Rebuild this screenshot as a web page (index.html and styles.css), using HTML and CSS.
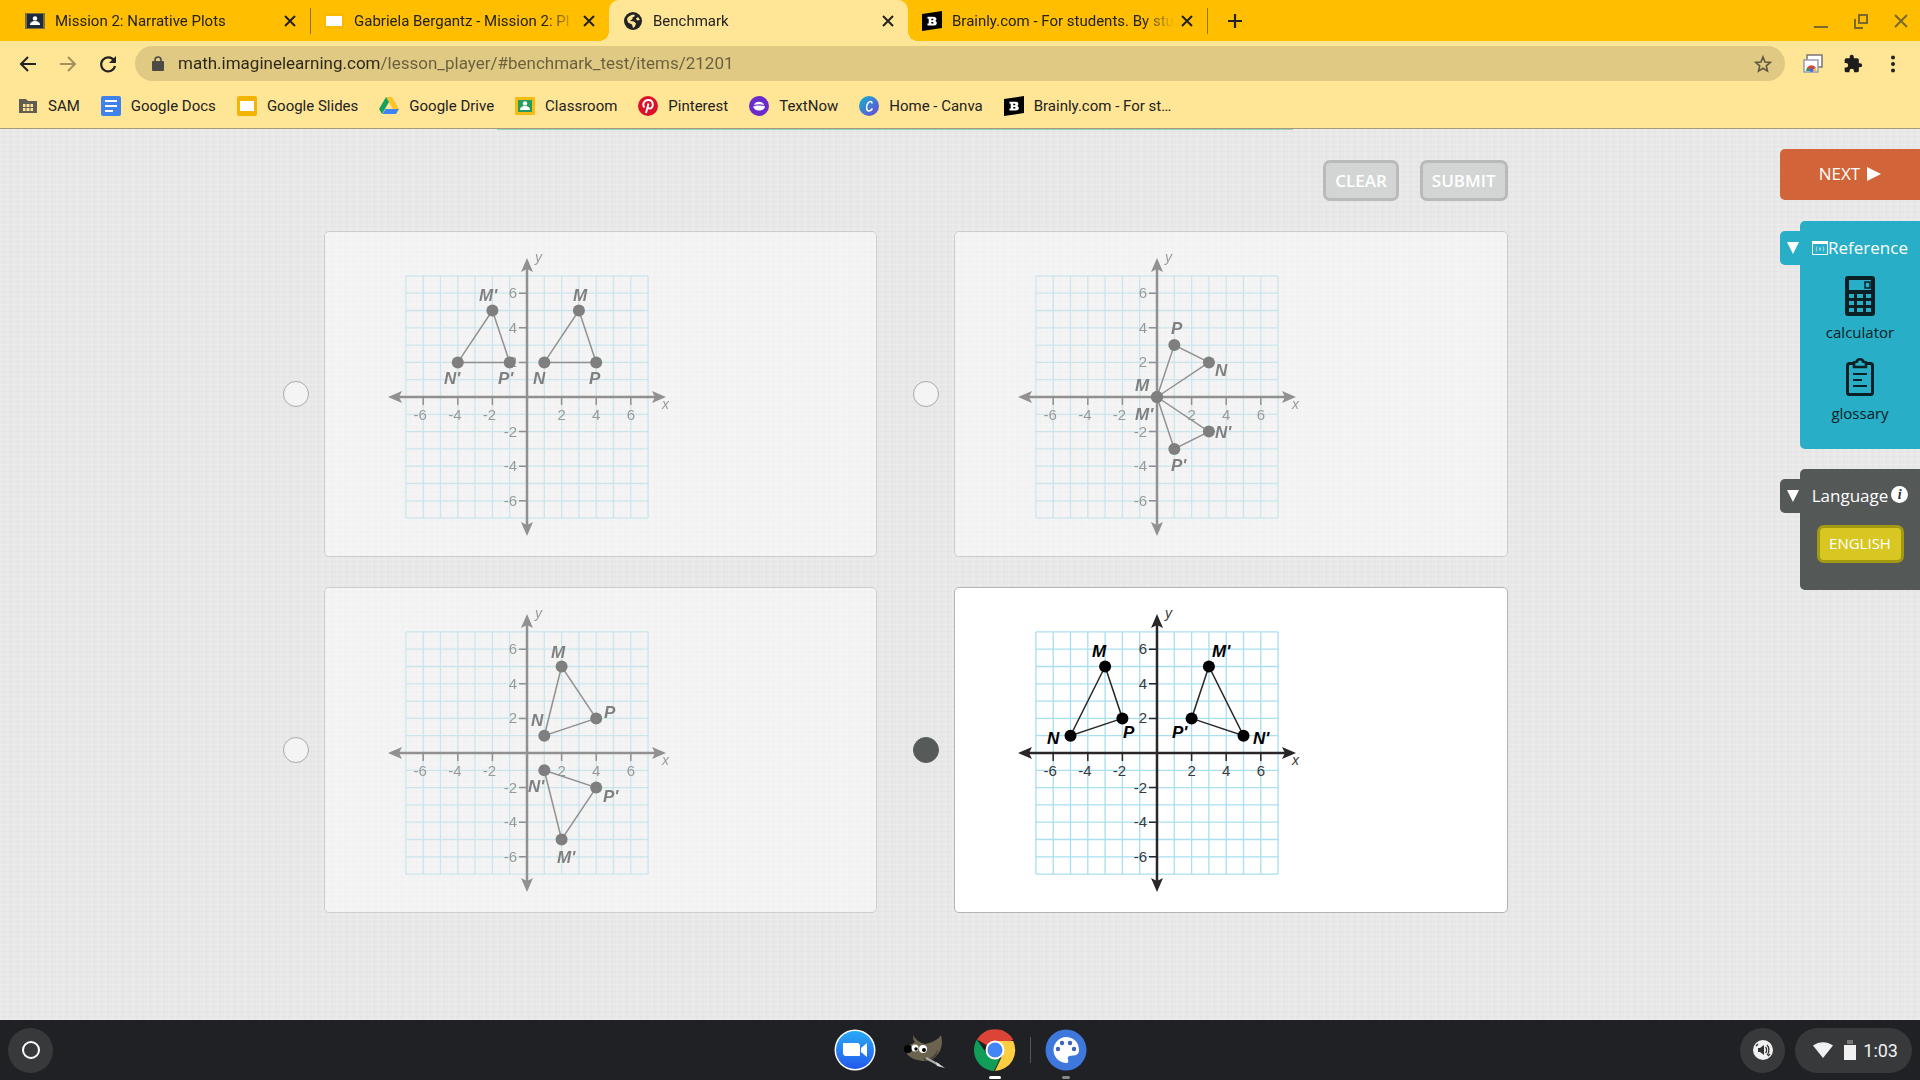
FILE: index.html
```html
<!DOCTYPE html>
<html lang="en">
<head>
  <meta charset="UTF-8">
  <meta name="viewport" content="width=device-width, initial-scale=1.0">
  <title>Benchmark</title>
  <link rel="stylesheet" href="styles.css">
</head>
<body>

  <!-- shared icons -->
  <svg class="sprite" aria-hidden="true">
    <symbol id="i-x" viewBox="0 0 20 20"><path d="M5 5l10 10M15 5L5 15" fill="none" stroke="currentColor" stroke-width="2"/></symbol>
    <symbol id="i-person" viewBox="0 0 20 20"><circle cx="10" cy="7.4" r="2.2" fill="#fff"/><path d="M5 14c0-3 2.600-4 5-4s5 1 5 4z" fill="#fff"/></symbol>
    <symbol id="i-brainly" viewBox="0 0 20 20"><path d="M0 3L20 0v17L0 20z" fill="#000"/><path d="M5.500 5.800h5.600c2.300 0 3.300.9 3.300 2.300 0 .9-.5 1.500-1.200 1.800 1 .3 1.600 1 1.600 2 0 1.800-1.300 2.600-3.500 2.600H5.500v-1.900h1.200V7.700H5.500zM9.300 7.700v1.500h1c.7 0 1-.2 1-.8s-.3-.7-1-.7zm0 3.200v1.700h1.100c.7 0 1.100-.2 1.100-.9s-.4-.8-1.100-.8z" fill="#fff" fill-rule="evenodd"/></symbol>
  </svg>

  <!-- ======= TABS ======= -->
  <div class="tabs">
    <div class="tab">
      <svg class="fav" viewBox="0 0 20 20"><path d="M0 2h20v16H0z" fill="#7d6c3c"/><path d="M2 3h16v14H2z" fill="#1d2b3a"/><use href="#i-person"/></svg>
      <span class="tab-title">Mission 2: Narrative Plots</span>
      <button class="close" aria-label="Close tab"><svg viewBox="0 0 20 20"><use href="#i-x"/></svg></button>
    </div>
    <div class="tab divided">
      <svg class="fav" viewBox="0 0 20 20"><rect y="2" width="20" height="16" rx="1" fill="#f9b900"/><path d="M2 5h16v10H2z" fill="#fff"/></svg>
      <span class="tab-title">Gabriela Bergantz - Mission 2: Pl</span>
      <button class="close" aria-label="Close tab"><svg viewBox="0 0 20 20"><use href="#i-x"/></svg></button>
    </div>
    <div class="tab active">
      <svg class="fav" viewBox="0 0 20 20"><circle cx="10" cy="10" r="9" fill="#222"/><path d="M4 8c1-2.500 3.500-4 7-4.500l1 1.500-2.500 1.500v1.500L7 10l4 .5 2 2-1 3-2 1.500-1-3.500-4-2z" fill="#ffe596"/><path d="M15 6l2 3-3 .5-1-2z" fill="#ffe596"/></svg>
      <span class="tab-title">Benchmark</span>
      <button class="close" aria-label="Close tab"><svg viewBox="0 0 20 20"><use href="#i-x"/></svg></button>
    </div>
    <div class="tab">
      <svg class="fav" viewBox="0 0 20 20"><use href="#i-brainly"/></svg>
      <span class="tab-title">Brainly.com - For students. By stu</span>
      <button class="close" aria-label="Close tab"><svg viewBox="0 0 20 20"><use href="#i-x"/></svg></button>
    </div>
    <button class="new-tab divided" aria-label="New tab"><svg viewBox="0 0 20 20"><path d="M10 3v14M3 10h14" stroke="#222" stroke-width="2.200"/></svg></button>
    <div class="win-btns">
      <button aria-label="Minimize"><svg viewBox="0 0 20 20"><path d="M3 16h14" stroke="#77692f" stroke-width="2"/></svg></button>
      <button aria-label="Restore"><svg viewBox="0 0 20 20" fill="none" stroke="#77692f" stroke-width="2"><path d="M8 4h8v8H8zM4 8v9h8"/></svg></button>
      <button aria-label="Close"><svg viewBox="0 0 20 20"><path d="M4 4l12 12M16 4L4 16" stroke="#77692f" stroke-width="2"/></svg></button>
    </div>
  </div>

  <!-- ======= ADDRESS BAR ======= -->
  <div class="toolbar">
    <button aria-label="Back"><svg viewBox="0 0 20 20" fill="none" stroke="#222" stroke-width="2"><path d="M18 10H3M10 3l-7 7 7 7"/></svg></button>
    <button aria-label="Forward"><svg viewBox="0 0 20 20" fill="none" stroke="#a3915c" stroke-width="2"><path d="M2 10h15M10 3l7 7-7 7"/></svg></button>
    <button aria-label="Reload"><svg viewBox="0 0 20 20"><path d="M16 6.500A7 7 0 1 0 17 12" fill="none" stroke="#222" stroke-width="2.200"/><path d="M18 2v7h-7z" fill="#222"/></svg></button>
    <div class="address">
      <svg class="lock" viewBox="0 0 12 16"><rect y="5" width="12" height="10" rx="1" fill="#4d4a45"/><path d="M3 6V4a3 3 0 0 1 6 0v2" fill="none" stroke="#4d4a45" stroke-width="1.600"/></svg>
      <input class="url" type="text" aria-label="Address" value="math.imaginelearning.com/lesson_player/#benchmark_test/items/21201">
      <button class="star" aria-label="Bookmark"><svg viewBox="0 0 20 20"><path d="M10 3l2 5 5.300.4-4 3.500 1.200 5.200L10 14.300l-4.500 2.800 1.200-5.200-4-3.500L8 8z" fill="none" stroke="#5f5741" stroke-width="1.600"/></svg></button>
    </div>
    <div class="tools">
      <button aria-label="Webstore"><svg viewBox="0 0 20 20"><path d="M4 1h15v12H4z" fill="#fff" stroke="#777" stroke-width="1.500"/><path d="M1 6h14v12H1z" fill="#fff" stroke="#9a9ab0" stroke-width="1.500"/><path d="M3 17a5 5 0 0 1 2-4l3 4z" fill="#2b9a4b"/><path d="M4 14a5 5 0 0 1 9 0l-4 2z" fill="#dd4433"/><path d="M13 14a5 5 0 0 1 .5 3H9z" fill="#f8c320"/><circle cx="8.500" cy="16" r="2" fill="#4467e8"/></svg></button>
      <button aria-label="Extensions"><svg viewBox="0 0 24 24"><path d="M20.500 11H19V7a2 2 0 0 0-2-2h-4V3.500a2.500 2.500 0 0 0-5 0V5H4a2 2 0 0 0-2 2v3.800h1.500a2.700 2.700 0 0 1 0 5.400H2V20a2 2 0 0 0 2 2h3.800v-1.500a2.700 2.700 0 0 1 5.400 0V22H17a2 2 0 0 0 2-2v-4h1.500a2.500 2.500 0 0 0 0-5z" fill="#1d1d1d"/></svg></button>
      <button aria-label="Menu"><svg viewBox="0 0 20 20" fill="#222"><circle cx="10" cy="3.500" r="2"/><circle cx="10" cy="10" r="2"/><circle cx="10" cy="16.500" r="2"/></svg></button>
    </div>
  </div>

  <!-- ======= BOOKMARKS ======= -->
  <nav class="bookmarks">
    <a href="#"><svg viewBox="0 0 20 20"><path d="M1 5V3h7l2 2h9v12H1z" fill="#625d50"/><path d="M5 8h10v7H5z" fill="#ffe596"/><path d="M8 8v7M12 8v7M5 11.500h10" stroke="#625d50"/></svg>SAM</a>
    <a href="#"><svg viewBox="0 0 20 20"><rect width="20" height="20" rx="2" fill="#3f82ee"/><path d="M4 5h12M4 10h12M4 15h8" stroke="#fff" stroke-width="2"/></svg>Google Docs</a>
    <a href="#"><svg viewBox="0 0 20 20"><rect width="20" height="20" rx="2" fill="#f4b406"/><path d="M3 5h14v10H3z" fill="#fff"/></svg>Google Slides</a>
    <a href="#"><svg viewBox="0 0 20 20"><path d="M7 1h6l7 12h-6z" fill="#fbc22b"/><path d="M7 1l3 5-7 12-3-5z" fill="#12a15f"/><path d="M6.500 13H20l-3 5H3.500z" fill="#3e82f4"/></svg>Google Drive</a>
    <a href="#"><svg viewBox="0 0 20 20"><rect y="1" width="20" height="18" rx="1" fill="#f4bc15"/><path d="M3 4h14v12H3z" fill="#279b5a"/><use href="#i-person"/></svg>Classroom</a>
    <a href="#"><svg viewBox="0 0 20 20"><circle cx="10" cy="10" r="10" fill="#dc1029"/><path d="M6.500 11.500C3.500 8 6.500 4 10.300 4c6 0 5.500 8.500 1.500 8.500-1.300 0-2-.8-2-1.500M10.500 7.500L8 17" fill="none" stroke="#fff" stroke-width="1.900"/></svg>Pinterest</a>
    <a href="#"><svg viewBox="0 0 20 20"><circle cx="10" cy="10" r="10" fill="#6a2bc8"/><path d="M5 9c1-4.500 9-4.500 10 0-3-1-7-1-10 0zm-1 1.500c3-1.500 9-1.500 12 0-.5 3-3 4-6 4s-5-1.500-6-4z" fill="#fff"/></svg>TextNow</a>
    <a href="#"><svg viewBox="0 0 20 20"><defs><linearGradient id="canva" x1="0" x2="1" y1="0" y2="1"><stop offset="0" stop-color="#13b5cd"/><stop offset="1" stop-color="#6b43dc"/></linearGradient></defs><circle cx="10" cy="10" r="10" fill="url(#canva)"/><path d="M13 7.500c0-3-2.500-2.500-4-.5-2 3-2 8 1 8 1.500 0 2.500-.8 3.500-2.500" fill="none" stroke="#fff" stroke-width="1.500"/></svg>Home - Canva</a>
    <a href="#"><svg viewBox="0 0 20 20"><use href="#i-brainly"/></svg>Brainly.com - For st…</a>
  </nav>

  <!-- ======= LESSON ======= -->
  <div class="lesson">
    <main>
      <div class="progress"></div>
      <form class="question">
        <div class="actions">
          <button type="reset" class="btn">CLEAR</button>
          <button type="submit" class="btn">SUBMIT</button>
        </div>
        <div class="answers" id="answers"></div>
      </form>
    </main>

    <aside>
      <button class="next">NEXT <svg viewBox="0 0 14 14"><path d="M0 0l14 7-14 7z" fill="#fff"/></svg></button>

      <section class="panel reference">
        <button class="toggle" aria-label="Toggle reference"><svg viewBox="0 0 12 12"><path d="M0 0h12L6 12z" fill="#fff"/></svg></button>
        <h2><svg viewBox="0 0 16 14"><path d="M.5.500h15v13H.5z" fill="none" stroke="#fff"/><path d="M0 0h16v3H0z" fill="#fff"/><path d="M5 5.500c-1 1-1 4 0 5M11 5.500c1 1 1 4 0 5M7 6.500l2 3M9 6.500l-2 3" fill="none" stroke="#fff" stroke-width=".6"/></svg>Reference</h2>
        <button class="tool">
          <svg viewBox="0 0 30 40"><rect width="30" height="40" rx="3" fill="#0b2025"/><path d="M4 4h22v10H4z" fill="#28aec6"/><path d="M20 6h5v6h-5z" fill="none" stroke="#0b2025" stroke-width="1.500"/><g fill="#28aec6"><path d="M4 18h5v4H4zM12 18h6v4h-6zM21 18h5v4h-5zM4 25h5v4H4zM12 25h6v4h-6zM21 25h5v4h-5zM4 32h5v4H4zM12 32h6v4h-6zM21 32h5v4h-5z"/></g></svg>
          calculator
        </button>
        <button class="tool">
          <svg viewBox="0 0 30 40" fill="none" stroke="#0b2025"><rect x="2.500" y="6.500" width="25" height="31" rx="2" stroke-width="3"/><path d="M9 10V5.500l3-1c0-3 6-3 6 0l3 1V10z" fill="#28aec6" stroke-width="2.500"/><path d="M8 17h14M8 23h9M8 29h14" stroke-width="2"/></svg>
          glossary
        </button>
      </section>

      <section class="panel language">
        <button class="toggle" aria-label="Toggle language"><svg viewBox="0 0 12 12"><path d="M0 0h12L6 12z" fill="#fff"/></svg></button>
        <h2>Language<span class="info">i</span></h2>
        <button class="english">ENGLISH</button>
      </section>
    </aside>
  </div>

  <!-- ======= SHELF ======= -->
  <footer class="shelf">
    <div class="shelf-side">
      <button class="round" aria-label="Launcher"><svg viewBox="0 0 20 20"><circle cx="10" cy="10" r="8" fill="none" stroke="#fff" stroke-width="2"/></svg></button>
    </div>
    <div class="apps">
      <button aria-label="Zoom"><svg viewBox="0 0 42 42"><defs><linearGradient id="zm" x2="0" y2="1"><stop offset="0" stop-color="#29a9f5"/><stop offset="1" stop-color="#2459ec"/></linearGradient></defs><circle cx="21" cy="21" r="20.500" fill="#fff"/><circle cx="21" cy="21" r="19" fill="url(#zm)"/><path d="M9 14h14a3 3 0 0 1 3 3v10H12a3 3 0 0 1-3-3zM27 19l6-5v14l-6-5z" fill="#fff"/></svg></button>
      <button aria-label="GIMP"><svg viewBox="0 0 42 42"><path d="M9 6c2 4 7 8 12 9 6-1 13-4 16-9 2 7 1 15-4 20-3 4-7 6-12 6-6 0-14-2-18-7 0-6 2-9 8-12-2-2-2-4-2-7z" fill="#6b6250"/><path d="M19 29c6 2 11-1 15-9-1 9-7 13-13 12z" fill="#4a4336"/><circle cx="4" cy="20" r="4" fill="#000"/><circle cx="11" cy="19" r="3.500" fill="#fff"/><circle cx="19" cy="20" r="4" fill="#fff"/><circle cx="12" cy="20" r="1.700"/><circle cx="20" cy="21" r="2"/><path d="M22 29l13 7" stroke="#aaa" stroke-width="2.500"/><path d="M32 33l9 6-8-2z" fill="#ddd"/></svg></button>
      <button class="open" aria-label="Chrome"><svg viewBox="0 0 42 42"><path d="M21 21L3 10.500A21 21 0 0 1 39.200 10.500z" fill="#dc4437"/><path d="M21 12h18.200A21 21 0 0 1 21 42l7.800-16.500z" fill="#fecd40"/><path d="M2.800 10.500l10.400 15 8 4.500 4.500 0L20 42A21 21 0 0 1 2.800 10.500z" fill="#109d58"/><circle cx="21" cy="21" r="9.500" fill="#fff"/><circle cx="21" cy="21" r="7.500" fill="#4285f4"/></svg></button>
      <span class="sep"></span>
      <button class="open idle" aria-label="Canvas"><svg viewBox="0 0 42 42"><circle cx="21" cy="21" r="20.500" fill="#3f78dd"/><path d="M21 8a13 13 0 1 0 1 26c3-1 0-4 1-6 2-3 11 1 11-7C34 13 28 8 21 8z" fill="#fff"/><g fill="#3f63b8"><circle cx="13" cy="20" r="2.200"/><circle cx="17" cy="14" r="2.200"/><circle cx="25" cy="14" r="2.200"/><circle cx="29" cy="20" r="2.200"/></g></svg></button>
    </div>
    <div class="shelf-side right">
      <button class="round" aria-label="Sound"><svg viewBox="0 0 20 20"><circle cx="10" cy="10" r="10" fill="#f1f1f1"/><path d="M5 8h2l4-3v10l-4-3H5z" fill="#333"/><path d="M12.500 7c1.500 1.500 1.500 4.500 0 6M14 5c2.500 2 2.500 8 0 10M3 6l2-2M15 16l2-2" fill="none" stroke="#333" stroke-width="1.300"/></svg></button>
      <button class="tray">
        <svg class="wifi" viewBox="0 0 20 16"><path d="M0 3.500C6-1 14-1 20 3.500L10 16z" fill="#f1f1f1"/></svg>
        <svg class="battery" viewBox="0 0 12 20"><path d="M3 0h6v4H3z" fill="#777"/><path d="M0 5h12v15H0z" fill="#f1f1f1"/></svg>
        1:03
      </button>
    </div>
  </footer>

  <script>
    // points are in grid units, labels are offsets from the origin
    const answers = [
      {
        shapes: [[[-2, 5], [-4, 2], [-1, 2]], [[3, 5], [1, 2], [4, 2]]],
        labels: [["M'", -48, -96], ["N'", -83, -13], ["P'", -29, -13], ["M", 46, -96], ["N", 6, -13], ["P", 62, -13]]
      },
      {
        shapes: [[[0, 0], [1, 3], [3, 2]], [[0, 0], [1, -3], [3, -2]]],
        labels: [["P", 14, -63], ["N", 58, -21], ["M", -22, -6], ["M'", -22, 23], ["N'", 58, 41], ["P'", 14, 74]]
      },
      {
        shapes: [[[2, 5], [1, 1], [4, 2]], [[1, -1], [4, -2], [2, -5]]],
        labels: [["M", 24, -95], ["N", 4, -27], ["P", 77, -35], ["N'", 1, 39], ["P'", 76, 49], ["M'", 30, 110]]
      },
      {
        shapes: [[[-3, 5], [-5, 1], [-2, 2]], [[3, 5], [2, 2], [5, 1]]],
        labels: [["M", -65, -96], ["N", -110, -9], ["P", -34, -15], ["M'", 55, -96], ["P'", 15, -15], ["N'", 96, -9]],
        checked: true
      }
    ];

    const unit = 17.3;

    function drawGraph(a) {
      const edge = 7 * unit;
      let s = '';
      for (let i = -7; i <= 7; i++) {
        s += `<path class="grid" d="M${i * unit} ${-edge}V${edge}M${-edge} ${i * unit}H${edge}"/>`;
      }
      s += '<path class="axis" d="M-130 0H130M0 -130V130"/>';
      s += '<path class="arrow" d="M-139 0l14-6-3 6 3 6zM139 0l-14-6 3 6-3 6zM0-139l-6 14 6-3 6 3zM0 139l-6-14 6 3 6-3z"/>';
      [-6, -4, -2, 2, 4, 6].forEach(n => {
        s += `<path class="tick" d="M${n * unit} 0v8M-8 ${-n * unit}h8"/>`;
        s += `<text class="num" text-anchor="middle" x="${n * unit - (n < 0 ? 3 : 0)}" y="23">${n}</text>`;
        s += `<text class="num" text-anchor="end" x="-10" y="${-n * unit + 5}">${n}</text>`;
      });
      s += '<text class="var" x="8" y="-135">y</text><text class="var" x="135" y="12">x</text>';
      a.shapes.forEach(pts => {
        s += `<polygon class="side" points="${pts.map(p => p[0] * unit + ',' + -p[1] * unit).join(' ')}"/>`;
        pts.forEach(p => s += `<circle cx="${p[0] * unit}" cy="${-p[1] * unit}" r="6"/>`);
      });
      a.labels.forEach(l => s += `<text class="name" x="${l[1]}" y="${l[2]}">${l[0]}</text>`);
      return s;
    }

    document.getElementById('answers').innerHTML = answers.map((a, i) => `
      <div class="answer">
        <input type="radio" name="answer" id="a${i}" ${a.checked ? 'checked' : ''}>
        <label class="card" for="a${i}">
          <svg class="graph" viewBox="-142 -150 290 290" role="img" aria-label="Graph ${i + 1}">${drawGraph(a)}</svg>
        </label>
      </div>
    `).join('');
  </script>
</body>
</html>
```

FILE: styles.css
```css
* {
  box-sizing: border-box;
}

body {
  margin: 0;
  min-height: 100vh;
  display: flex;
  flex-direction: column;
  font-family: Roboto, sans-serif;
  color: #222;
  background: #e8e8e8;
}

button {
  border: 0;
  padding: 0;
  background: none;
  font: inherit;
  color: inherit;
  cursor: pointer;
}

svg {
  display: block;
  flex: none;
}

.sprite {
  position: absolute;
  width: 0;
  height: 0;
}

/* ===== TABS ===== */
.tabs {
  display: flex;
  height: 41px;
  padding-left: 11px;
  background: #ffbf00;
}

.tab {
  position: relative;
  flex: 0 1 299px;
  min-width: 0;
  display: flex;
  align-items: center;
  padding: 0 10px 0 14px;
  font-size: 15px;
}

.tab.active {
  background: #ffe596;
  border-radius: 10px 10px 0 0;
}

.tab.active::before,
.tab.active::after {
  content: "";
  position: absolute;
  bottom: 0;
  width: 10px;
  height: 10px;
}

.tab.active::before {
  left: -10px;
  background: radial-gradient(circle at 0 0, transparent 10px, #ffe596 10px);
}

.tab.active::after {
  right: -10px;
  background: radial-gradient(circle at 100% 0, transparent 10px, #ffe596 10px);
}

.divided {
  background: linear-gradient(#8a7326, #8a7326) 0 50% / 1px 26px no-repeat;
}

.fav {
  width: 20px;
  height: 20px;
}

.tab-title {
  flex: 1;
  min-width: 0;
  margin: 0 2px 0 10px;
  overflow: hidden;
  white-space: nowrap;
  -webkit-mask-image: linear-gradient(90deg, #000 calc(100% - 32px), transparent);
  mask-image: linear-gradient(90deg, #000 calc(100% - 32px), transparent);
}

.close svg {
  width: 20px;
  height: 20px;
}

.new-tab {
  padding: 0 18px;
}

.new-tab svg {
  width: 20px;
  height: 20px;
}

.win-btns {
  display: flex;
  align-items: center;
  gap: 20px;
  margin-left: auto;
  padding-right: 9px;
}

.win-btns svg {
  width: 20px;
  height: 20px;
}

/* ===== ADDRESS BAR ===== */
.toolbar {
  display: flex;
  align-items: center;
  gap: 20px;
  height: 45px;
  padding: 0 17px 0 18px;
  background: #ffe596;
}

.toolbar svg {
  width: 20px;
  height: 20px;
}

.address {
  flex: 1;
  display: flex;
  align-items: center;
  gap: 14px;
  height: 35px;
  margin: 0 -2px 0 -3px;
  padding: 0 12px 0 17px;
  border-radius: 18px;
  background: #dfc983;
}

.address .lock {
  width: 12px;
  height: 16px;
}

.url {
  flex: 1;
  min-width: 0;
  height: 35px;
  border: 0;
  padding: 0;
  outline: 0;
  font: 17px/35px Roboto, sans-serif;
  /* domain dark, path lighter */
  background: linear-gradient(90deg, #2a2618 202px, #695f3e 202px);
  -webkit-background-clip: text;
  background-clip: text;
  color: transparent;
}

.tools {
  display: flex;
  gap: 20px;
}

/* ===== BOOKMARKS ===== */
.bookmarks {
  display: flex;
  align-items: center;
  gap: 21px;
  height: 43px;
  padding: 0 18px 2px;
  border-bottom: 1px solid #a29c7c;
  background: #ffe596;
  font-size: 15px;
}

.bookmarks a {
  display: flex;
  align-items: center;
  gap: 10px;
  color: #222;
  text-decoration: none;
  white-space: nowrap;
}

.bookmarks svg {
  width: 20px;
  height: 20px;
}

/* ===== LESSON ===== */
.lesson {
  flex: 1;
  display: flex;
  align-items: flex-start;
  font-family: "Open Sans", sans-serif;
  /* linen weave */
  background:
    repeating-linear-gradient(90deg, rgba(255,255,255,.15) 0 1px, transparent 1px 3px, rgba(0,0,0,.01) 3px 4px, transparent 4px 7px),
    repeating-linear-gradient(0deg, rgba(255,255,255,.15) 0 1px, transparent 1px 3px, rgba(0,0,0,.01) 3px 4px, transparent 4px 5px),
    #e8e8e8;
}

main {
  flex: 1;
  min-width: 0;
  padding-left: 10px;
}

.progress {
  width: 45%;
  height: 1px;
  margin: 0 auto;
  background: #a0cdbb;
}

.question {
  max-width: 1225px;
  margin: 0 auto;
}

.actions {
  display: flex;
  justify-content: flex-end;
  gap: 21px;
  padding: 30px 0;
}

.btn {
  height: 41px;
  padding: 0 9px;
  border: 3px solid #b8bbba;
  border-radius: 7px;
  background: #d2d5d4;
  color: #fff;
  font-size: 17px;
  font-weight: 600;
}

.answers {
  display: grid;
  grid-template-columns: 1fr 1fr;
  gap: 30px 36px;
}

.answer {
  display: flex;
  align-items: center;
  gap: 15px;
}

.answer input {
  appearance: none;
  width: 26px;
  height: 26px;
  margin: 0;
  border: 1px solid #aaa;
  border-radius: 50%;
  background: #f4f4f4;
}

.answer input:checked {
  border-color: #565a59;
  background: #565a59;
}

.card {
  flex: 1;
  padding: 15px 0 19px 60px;
  border: 1px solid #b4b4b4;
  border-radius: 5px;
  background: #fff;
  opacity: .5;
}

.answer input:checked + .card {
  opacity: 1;
}

.graph {
  width: 290px;
  height: 290px;
  font-family: "Liberation Sans", Arial, sans-serif;
  opacity: .9;
}

.answer input:checked + .card .graph {
  opacity: 1;
}

.grid {
  fill: none;
  stroke: #a9dff0;
  stroke-width: 1.3;
}

.axis {
  fill: none;
  stroke: #2a2628;
  stroke-width: 2.5;
}

.tick {
  fill: none;
  stroke: #2a2628;
  stroke-width: 1.5;
}

.arrow {
  fill: #2a2628;
}

.side {
  fill: none;
  stroke: #2a2628;
  stroke-width: 1.5;
}

.num {
  font-size: 15px;
  fill: #3a3a3a;
}

.var {
  font-size: 14px;
  font-style: italic;
  fill: #3a3a3a;
}

.name {
  font-size: 17px;
  font-weight: bold;
  font-style: italic;
}

/* ===== SIDEBAR ===== */
aside {
  width: 140px;
  padding-top: 20px;
  color: #fff;
}

.next {
  display: flex;
  align-items: center;
  justify-content: center;
  gap: 7px;
  width: 140px;
  height: 51px;
  padding: 0 0 2px;
  border-radius: 5px 0 0 5px;
  background: #d16438;
  font-size: 17px;
}

.next svg {
  width: 14px;
  height: 14px;
}

.panel {
  position: relative;
  display: flex;
  flex-direction: column;
  align-items: center;
  margin: 21px 0 0 20px;
  padding-top: 12px;
  border-radius: 5px 0 0 5px;
}

.panel h2 {
  display: flex;
  align-items: center;
  margin: 0;
  font-size: 17px;
  line-height: 30px;
  font-weight: 500;
}

.panel h2 svg {
  width: 16px;
  height: 14px;
}

.toggle {
  position: absolute;
  top: 10px;
  left: -20px;
  display: flex;
  align-items: center;
  justify-content: center;
  width: 26px;
  height: 34px;
  padding-bottom: 1px;
  border-radius: 5px 0 0 5px;
  background: inherit;
}

.toggle svg {
  width: 12px;
  height: 12px;
}

.reference {
  padding-bottom: 24px;
  background: #28aec6;
}

.tool {
  display: flex;
  flex-direction: column;
  align-items: center;
  gap: 4px;
  margin-top: 13px;
  color: #0b2025;
  font-size: 15px;
  line-height: 24px;
  font-weight: 500;
}

.tool svg {
  width: 30px;
  height: 40px;
}

.language {
  margin-top: 20px;
  padding-bottom: 27px;
  background: #545857;
}

.info {
  width: 17px;
  height: 17px;
  margin: 0 0 4px 3px;
  border-radius: 50%;
  background: #fff;
  color: #333;
  font: italic bold 14px/17px "Liberation Serif", serif;
  text-align: center;
}

.english {
  width: 87px;
  height: 38px;
  margin-top: 14px;
  padding-bottom: 3px;
  border: 3px solid #a39a12;
  border-radius: 7px;
  background: #d8c722;
  font-size: 15px;
  font-weight: 500;
}

/* ===== SHELF ===== */
.shelf {
  display: flex;
  align-items: center;
  height: 60px;
  padding: 0 8px;
  background: #202124;
  color: #f1f1f1;
}

.shelf-side {
  flex: 1;
  display: flex;
  gap: 10px;
}

.shelf-side.right {
  justify-content: flex-end;
}

.round {
  display: flex;
  align-items: center;
  justify-content: center;
  width: 45px;
  height: 45px;
  border-radius: 50%;
  background: #38393b;
}

.round svg {
  width: 20px;
  height: 20px;
}

.apps {
  display: flex;
  align-items: center;
  gap: 28px;
}

.apps button {
  position: relative;
}

.apps svg {
  width: 42px;
  height: 42px;
}

.sep {
  width: 1px;
  height: 26px;
  margin: 0 -14px;
  background: #55565a;
}

.open::after {
  content: "";
  position: absolute;
  left: 50%;
  bottom: -8px;
  width: 12px;
  height: 3px;
  margin-left: -6px;
  border-radius: 2px;
  background: #fff;
}

.open.idle::after {
  width: 8px;
  margin-left: -4px;
  background: #888;
}

.tray {
  display: flex;
  align-items: center;
  height: 45px;
  padding: 0 14px 0 18px;
  border-radius: 23px;
  background: #38393b;
  font-size: 18px;
}

.wifi {
  width: 20px;
  height: 16px;
  margin-right: 11px;
}

.battery {
  width: 12px;
  height: 20px;
  margin-right: 7px;
}
```
